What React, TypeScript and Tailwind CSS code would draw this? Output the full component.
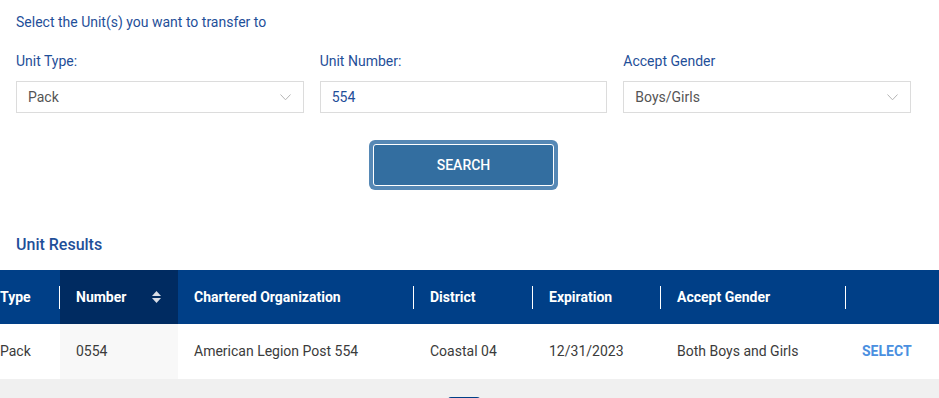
import React from "react";

const font = { fontFamily: "Roboto, 'Liberation Sans', sans-serif" };

function Chevron() {
  return (
    <svg width="11" height="7" viewBox="0 0 11 7" fill="none" className="shrink-0">
      <path d="M0.5 0.5 L5.5 5.8 L10.5 0.5" stroke="#b5b5b5" strokeWidth="1" />
    </svg>
  );
}

function SortIcon() {
  return (
    <svg width="9" height="12" viewBox="0 0 9 12" className="shrink-0">
      <path d="M4.5 0 L9 5 H0 Z" fill="#d8dde6" />
      <path d="M0 7 H9 L4.5 12 Z" fill="#d8dde6" />
    </svg>
  );
}

const columns = [
  { label: "Type", w: "w-[76px]", sep: true },
  { label: "Number", w: "w-[118px]", sep: false, sort: true },
  { label: "Chartered Organization", w: "w-[236px]", sep: true },
  { label: "District", w: "w-[119px]", sep: true },
  { label: "Expiration", w: "w-[128px]", sep: true },
  { label: "Accept Gender", w: "w-[185px]", sep: true },
  { label: "", w: "w-[120px]", sep: false },
];

const row = ["Pack", "0554", "American Legion Post 554", "Coastal 04", "12/31/2023", "Both Boys and Girls"];

export default function App() {
  return (
    <div className="w-[939px] h-[398px] overflow-hidden bg-white" style={font}>
      <div className="px-4">
        <p className="pt-[13px] text-[14px] leading-[18px] text-[#1f4f99]">
          Select the Unit(s) you want to transfer to
        </p>

        <div className="mt-[21px] grid grid-cols-3 gap-x-[16px] w-[895px]">
          <div>
            <label className="block text-[14px] leading-[18px] text-[#1f4f99]">Unit Type:</label>
            <div className="mt-[11px] h-[32px] border border-[#dcdcdc] flex items-center justify-between pl-[11px] pr-[12px]">
              <span className="text-[14px] text-[#555]">Pack</span>
              <Chevron />
            </div>
          </div>
          <div>
            <label className="block text-[14px] leading-[18px] text-[#1f4f99]">Unit Number:</label>
            <div className="mt-[11px] h-[32px] border border-[#dcdcdc] flex items-center pl-[11px]">
              <span className="text-[14px] text-[#1f4f99]">554</span>
            </div>
          </div>
          <div>
            <label className="block text-[14px] leading-[18px] text-[#1f4f99]">Accept Gender</label>
            <div className="mt-[11px] h-[32px] border border-[#dcdcdc] flex items-center justify-between pl-[11px] pr-[12px]">
              <span className="text-[14px] text-[#555]">Boys/Girls</span>
              <Chevron />
            </div>
          </div>
        </div>

        <div className="mt-[27px] flex justify-center w-[895px]">
          <div className="w-[189px] h-[50px] rounded-[6px] bg-[#5688b5] p-[4px]">
            <button className="w-full h-full rounded-[3px] border border-white bg-[#336ea0] text-white text-[14px] font-medium">
              SEARCH
            </button>
          </div>
        </div>

        <h2 className="mt-[45px] text-[16px] leading-[20px] font-medium text-[#1f4f99]">Unit Results</h2>
      </div>

      <div className="mt-[15px] -ml-4 w-[1000px]">
        <div className="flex h-[54px] bg-[#003f87] text-white text-[14px] font-bold">
          {columns.map((c, i) => (
            <div
              key={i}
              className={`${c.w} shrink-0 flex items-center justify-between pl-[16px] ${
                c.sort ? "bg-[#002b61] pr-[17px]" : ""
              }`}
            >
              <span>{c.label}</span>
              {c.sort && <SortIcon />}
              {c.sep && <span className="w-px h-[23px] bg-white" />}
            </div>
          ))}
        </div>
        <div className="flex h-[55px] bg-white text-[14px] text-[#3b3b3b]">
          {columns.map((c, i) => (
            <div
              key={i}
              className={`${c.w} shrink-0 flex items-center pl-[16px] ${c.sort ? "bg-[#f8f8f8]" : ""}`}
            >
              {i < row.length ? (
                <span>{row[i]}</span>
              ) : (
                <span className="text-[#4a8fdf] font-bold">SELECT</span>
              )}
            </div>
          ))}
        </div>
        <div className="h-[20px] bg-[#f0f0f0] flex justify-start pl-[464px] pt-[18px]">
          <div className="w-[32px] h-[10px] rounded-t-[3px] border border-b-0 border-[#003f87] bg-white" />
        </div>
      </div>
    </div>
  );
}
